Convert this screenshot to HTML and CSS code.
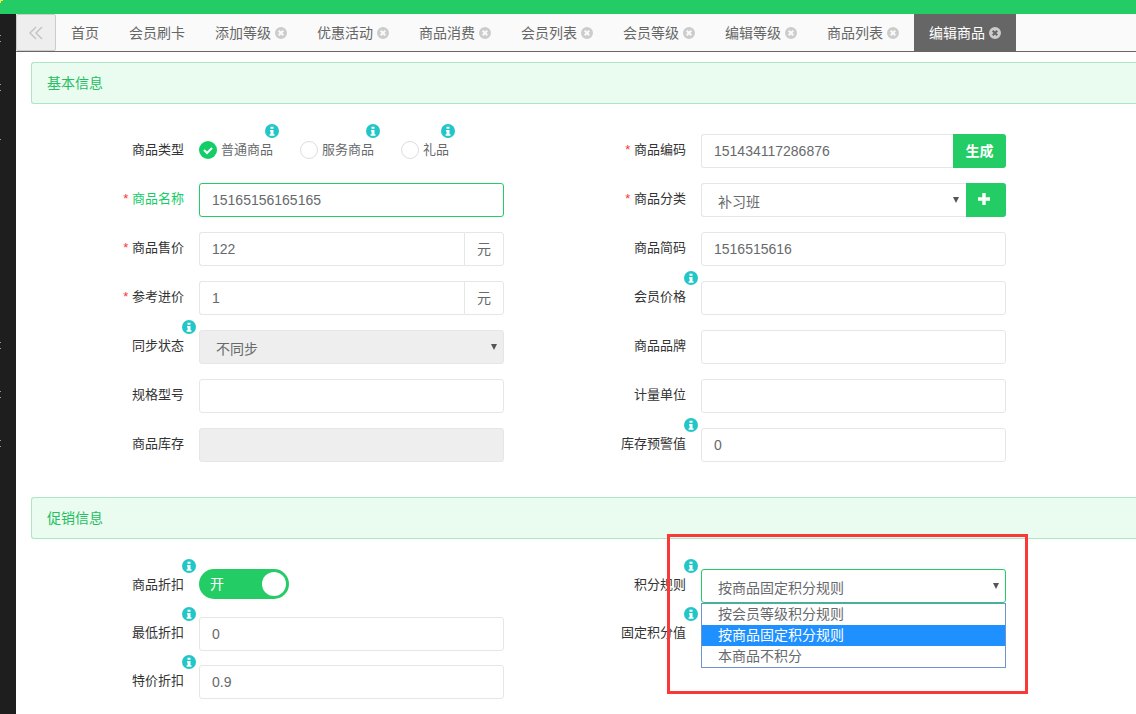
FILE: index.html
```html
<!DOCTYPE html>
<html lang="zh-CN">
<head>
<meta charset="utf-8">
<title>编辑商品</title>
<link rel="stylesheet" href="styles.css">
</head>
<body>
<svg class="sprite" aria-hidden="true">
  <symbol id="info" viewBox="0 0 14 14"><circle cx="7" cy="7" r="7" fill="#23c6c8"/><path d="M5.5 2.8h3v2h-3zM5 6h3.5v4.2h1v1.6H4.6v-1.6h1V7.4H5z" fill="#fff"/></symbol>
  <symbol id="close" viewBox="0 0 12 12"><path fill-rule="evenodd" fill="#ccc" d="M6 0a6 6 0 1 0 0 12A6 6 0 0 0 6 0zM4.4 3 6 4.6 7.6 3 9 4.4 7.4 6 9 7.6 7.6 9 6 7.4 4.4 9 3 7.6 4.6 6 3 4.4z"/></symbol>
  <symbol id="caret" viewBox="0 0 6 6"><path d="M0 0h6L3 6z" fill="#555"/></symbol>
</svg>
<header class="topbar"><svg class="corner" viewBox="0 0 4 3" aria-hidden="true"><path d="M0 0h3v1H1v2H0z" fill="#ffeb3b"/></svg></header>
<div class="shell">
  <aside class="sidebar" aria-hidden="true">
    <i class="tick"></i><i class="tick"></i><i class="tick short"></i><i class="tick far"></i><i class="tick"></i><i class="tick"></i>
  </aside>
  <main class="main">
    <nav class="tabs">
      <button class="tabs-back" aria-label="向左"><svg viewBox="0 0 14 14"><path d="M7 1 1 7l6 6M13 1 7 7l6 6" fill="none" stroke="#c4c4c4" stroke-width="1.5"/></svg></button>
      <a class="tab" href="#">首页</a>
      <a class="tab" href="#">会员刷卡</a>
      <a class="tab" href="#">添加等级<svg><use href="#close"/></svg></a>
      <a class="tab" href="#">优惠活动<svg><use href="#close"/></svg></a>
      <a class="tab" href="#">商品消费<svg><use href="#close"/></svg></a>
      <a class="tab" href="#">会员列表<svg><use href="#close"/></svg></a>
      <a class="tab" href="#">会员等级<svg><use href="#close"/></svg></a>
      <a class="tab" href="#">编辑等级<svg><use href="#close"/></svg></a>
      <a class="tab" href="#">商品列表<svg><use href="#close"/></svg></a>
      <a class="tab active" href="#">编辑商品<svg><use href="#close"/></svg></a>
    </nav>
    <form class="page">
      <h2 class="section-title">基本信息</h2>
      <div class="grid">
        <div class="row">
          <span class="label">商品类型</span>
          <div class="field radios">
            <label class="radio"><input type="radio" name="type" checked><span class="dot"><svg viewBox="0 0 18 18"><path d="M5 9l3 3 5-5" fill="none" stroke="#fff" stroke-width="2"/></svg></span>普通商品<svg class="info"><use href="#info"/></svg></label>
            <label class="radio"><input type="radio" name="type"><span class="dot"></span>服务商品<svg class="info"><use href="#info"/></svg></label>
            <label class="radio"><input type="radio" name="type"><span class="dot"></span>礼品<svg class="info"><use href="#info"/></svg></label>
          </div>
        </div>
        <div class="row">
          <label class="label" for="code"><b>*</b> 商品编码</label>
          <div class="field"><input class="input joined" id="code" value="151434117286876"><button class="btn" type="button">生成</button></div>
        </div>
        <div class="row">
          <label class="label current" for="name"><b>*</b> 商品名称</label>
          <div class="field"><input class="input focused" id="name" value="15165156165165"></div>
        </div>
        <div class="row">
          <label class="label" for="cat"><b>*</b> 商品分类</label>
          <div class="field"><div class="select"><select class="input joined" id="cat"><option>补习班</option></select><svg class="caret"><use href="#caret"/></svg></div><button class="btn add" type="button" aria-label="添加分类"><svg viewBox="0 0 12 12"><path d="M4.3 0h3.4v4.3H12v3.4H7.7V12H4.3V7.7H0V4.3h4.3z" fill="#fff"/></svg></button></div>
        </div>
        <div class="row">
          <label class="label" for="price"><b>*</b> 商品售价</label>
          <div class="field"><input class="input joined" id="price" value="122"><span class="unit">元</span></div>
        </div>
        <div class="row">
          <label class="label" for="short">商品简码</label>
          <div class="field"><input class="input" id="short" value="1516515616"></div>
        </div>
        <div class="row">
          <label class="label" for="cost"><b>*</b> 参考进价</label>
          <div class="field"><input class="input joined" id="cost" value="1"><span class="unit">元</span></div>
        </div>
        <div class="row">
          <label class="label" for="vip">会员价格<svg class="info"><use href="#info"/></svg></label>
          <div class="field"><input class="input" id="vip"></div>
        </div>
        <div class="row">
          <label class="label" for="sync">同步状态<svg class="info"><use href="#info"/></svg></label>
          <div class="field"><div class="select"><select class="input" id="sync" disabled><option>不同步</option></select><svg class="caret"><use href="#caret"/></svg></div></div>
        </div>
        <div class="row">
          <label class="label" for="brand">商品品牌</label>
          <div class="field"><input class="input" id="brand"></div>
        </div>
        <div class="row">
          <label class="label" for="spec">规格型号</label>
          <div class="field"><input class="input" id="spec"></div>
        </div>
        <div class="row">
          <label class="label" for="measure">计量单位</label>
          <div class="field"><input class="input" id="measure"></div>
        </div>
        <div class="row">
          <label class="label" for="stock">商品库存</label>
          <div class="field"><input class="input" id="stock" disabled></div>
        </div>
        <div class="row">
          <label class="label" for="warn">库存预警值<svg class="info"><use href="#info"/></svg></label>
          <div class="field"><input class="input" id="warn" value="0"></div>
        </div>
      </div>
      <h2 class="section-title">促销信息</h2>
      <div class="grid promo">
        <div class="row">
          <label class="label" for="disc">商品折扣<svg class="info"><use href="#info"/></svg></label>
          <div class="field top"><label class="switch"><input type="checkbox" id="disc" checked><span>开</span><i></i></label></div>
        </div>
        <div class="row">
          <label class="label" for="rule">积分规则<svg class="info"><use href="#info"/></svg></label>
          <div class="field">
            <div class="select"><select class="input focused" id="rule"><option>按商品固定积分规则</option></select><svg class="caret"><use href="#caret"/></svg></div>
            <ul class="menu" role="listbox">
              <li role="option">按会员等级积分规则</li>
              <li role="option" aria-selected="true">按商品固定积分规则</li>
              <li role="option">本商品不积分</li>
            </ul>
            <div class="highlight"></div>
          </div>
        </div>
        <div class="row">
          <label class="label" for="min">最低折扣<svg class="info"><use href="#info"/></svg></label>
          <div class="field"><input class="input" id="min" value="0"></div>
        </div>
        <div class="row">
          <label class="label" for="fixed">固定积分值<svg class="info"><use href="#info"/></svg></label>
          <div class="field"><input class="input" id="fixed"></div>
        </div>
        <div class="row">
          <label class="label" for="special">特价折扣<svg class="info"><use href="#info"/></svg></label>
          <div class="field"><input class="input" id="special" value="0.9"></div>
        </div>
      </div>
    </form>
  </main>
</div>
</body>
</html>
```
FILE: styles.css
```css
* { box-sizing: border-box; }
body {
  margin: 0;
  min-height: 100vh;
  display: flex;
  flex-direction: column;
  background: #fff;
  color: #676a6c;
  font: 14px/20px "Liberation Sans", "Noto Sans CJK SC", sans-serif;
}
button, input, select { font: inherit; color: inherit; }
.sprite { position: absolute; width: 0; height: 0; }

.topbar { height: 14px; background: #23cc65; }
.corner { display: block; width: 4px; height: 3px; }

.shell { flex: 1; display: flex; }
.sidebar {
  width: 16px;
  flex-shrink: 0;
  background: #1e1e1e;
  display: flex;
  flex-direction: column;
  gap: 42px;
  padding-top: 21px;
}
.tick { width: 1px; height: 7px; border: solid #999; border-width: 1px 0; }
.tick.short { border-top-color: transparent; }
.tick.far { margin-top: 160px; }
.main { flex: 1; min-width: 0; }

.tabs {
  display: flex;
  height: 38px;
  background: #fafafa;
  border-bottom: 1px solid #666;
}
.tabs-back {
  width: 40px;
  padding: 5px 0 0;
  background: #eee;
  border: 1px solid #ccc;
  border-radius: 2px;
}
.tabs-back svg { width: 14px; height: 14px; }
.tab {
  display: flex;
  align-items: center;
  gap: 4px;
  padding: 0 15px;
  color: #666;
  text-decoration: none;
  white-space: nowrap;
}
.tab svg { width: 12px; height: 12px; }
.tab.active { background: #666; color: #fff; }

.page { padding: 10px 0 0 15px; }
.section-title {
  margin: 0;
  padding: 10px 15px;
  border: 1px solid #aee5c4;
  border-right: 0;
  border-radius: 3px 0 0 3px;
  background: #eafbf0;
  color: #23bf60;
  font-size: 14px;
  font-weight: normal;
}
.grid {
  display: grid;
  grid-template-columns: 1fr 1fr;
  gap: 15px 29px;
  padding: 30px 130px 35px 0;
}
.grid.promo { row-gap: 14px; padding-bottom: 14px; }
.row { display: flex; gap: 15px; height: 34px; min-width: 0; }
.label {
  position: relative;
  width: 153px;
  flex-shrink: 0;
  text-align: right;
  color: #333;
  font-size: 13px;
  line-height: 32px;
}
.label b { color: #f33; font-weight: normal; }
.label.current { color: #13ce66; }
.info { position: absolute; top: -10px; right: -12px; width: 14px; height: 14px; }
.field { position: relative; flex: 1; min-width: 0; display: flex; }
.field.top { align-items: flex-start; }

.input {
  flex: 1;
  width: 100%;
  min-width: 0;
  height: 34px;
  padding: 0 12px;
  border: 1px solid #e5e6e7;
  border-radius: 3px;
  background: #fff;
  outline: 0;
}
.input:disabled { background: #eee; color: #676a6c; opacity: 1; }
.input.focused { border-color: #23cc65; }
.input.joined { border-right: 0; border-radius: 3px 0 0 3px; }
.select { position: relative; flex: 1; min-width: 0; }
select.input { appearance: none; padding: 3px 16px 0; }
.caret { position: absolute; top: 14px; right: 7px; width: 6px; height: 6px; }
.unit {
  width: 40px;
  border: 1px solid #e5e6e7;
  border-radius: 0 3px 3px 0;
  text-align: center;
  line-height: 32px;
}
.btn {
  width: 53px;
  padding: 0;
  border: 0;
  border-radius: 0 3px 3px 0;
  background: #23cc65;
  color: #fff;
  font-weight: bold;
}
.btn.add { width: 40px; padding-right: 5px; }
.btn svg { width: 12px; height: 12px; }

.radios { gap: 27px; font-size: 13px; line-height: 32px; }
.radio { position: relative; display: flex; align-items: center; gap: 4px; height: 32px; white-space: nowrap; }
.radio input, .switch input { position: absolute; opacity: 0; margin: 0; }
.dot { width: 18px; height: 18px; border: 1px solid #ddd; border-radius: 50%; }
.radio input:checked + .dot { border: 0; background: #13ce66; }
.dot svg { display: block; width: 18px; height: 18px; }
.radio .info { right: -6px; }

.switch {
  display: flex;
  align-items: center;
  justify-content: space-between;
  width: 90px;
  height: 30px;
  padding: 0 3px 0 11px;
  border-radius: 15px;
  background: #23cc65;
  color: #fff;
}
.switch i { width: 24px; height: 24px; border-radius: 50%; background: #fff; }

.menu {
  position: absolute;
  z-index: 2;
  top: 34px;
  left: 0;
  right: 0;
  margin: 0;
  padding: 0;
  list-style: none;
  border: 1px solid #6f94cc;
  background: #fff;
}
.menu li { padding: 0 16px; line-height: 21px; }
.menu li[aria-selected="true"] { background: #1e90ff; color: #fff; }
.highlight {
  position: absolute;
  z-index: 3;
  top: -35px;
  left: -34px;
  right: -22px;
  height: 160px;
  border: 3px solid #fb3838;
  pointer-events: none;
}
```
